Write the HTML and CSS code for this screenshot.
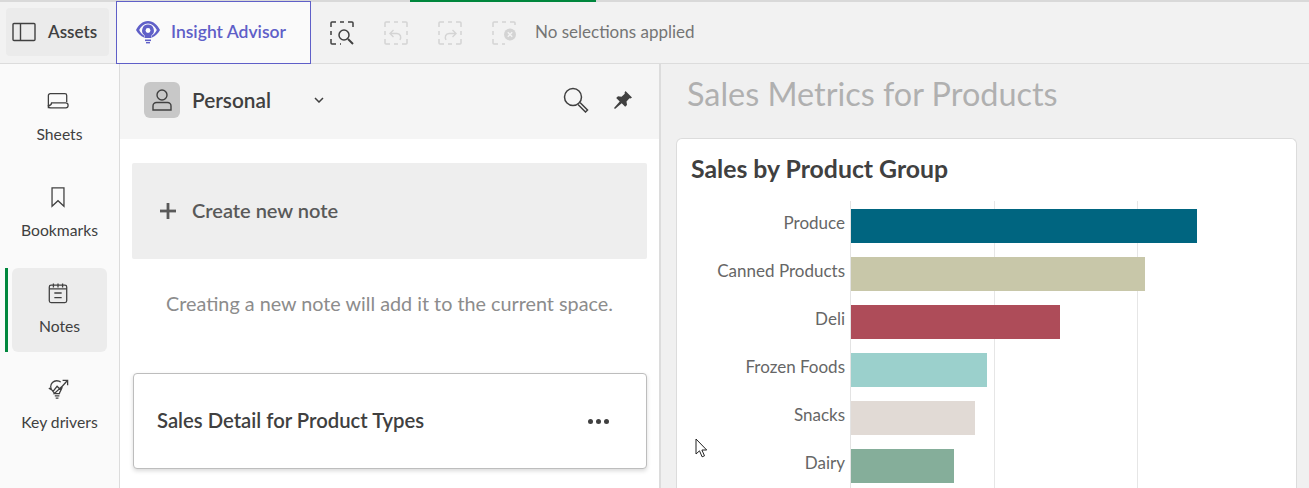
FILE: index.html
```html
<!DOCTYPE html>
<html lang="en">
<head>
    <meta charset="UTF-8">
    <meta name="viewport" content="width=device-width, initial-scale=1.0">
    <title>Sales Metrics for Products</title>
    <link rel="stylesheet" href="styles.css">
</head>
<body>
    <div class="progress"></div>
    <header class="toolbar">
        <button class="assets-btn">
            <svg width="24" height="20" viewBox="0 0 24 20" fill="none" stroke="#404040" stroke-width="1.4"><rect x="1" y="1.5" width="22" height="17" rx="1"/><path d="M8.5 1.5v17"/></svg>
            <span>Assets</span>
        </button>
        <button class="insight-btn">
            <svg width="26" height="24" viewBox="0 0 26 24"><path fill="#5f5fc8" d="M13 1C7.5 1 3.500 5 1 10c2 3.500 4.500 6 8 7.500V15.500c-2-1-3.600-3-4.800-5.500C6 6.500 9 3.500 13 3.500s7 3 8.800 6.500c-1.200 2.500-2.800 4.500-4.800 5.500v2c3.500-1.500 6-4 8-7.500C22.500 5 18.500 1 13 1z"/><path fill="#5f5fc8" d="M13 4.500a6 6 0 0 0-3.500 10.800V18h7v-2.700A6 6 0 0 0 13 4.500z"/><circle cx="13" cy="10.500" r="2.400" fill="#fff"/><rect x="10" y="19.500" width="6" height="1.600" fill="#5f5fc8"/><rect x="11" y="22" width="4" height="1.400" fill="#5f5fc8"/></svg>
            <span>Insight Advisor</span>
        </button>
        <div class="sel-tools">
            <svg class="sel-icon" viewBox="0 0 24 24" fill="none" stroke="#404040" stroke-width="1.500"><path d="M1 6V2a1 1 0 0 1 1-1h4M10 1h4M18 1h4a1 1 0 0 1 1 1v4M1 10v4M1 18v4a1 1 0 0 0 1 1h4M10 23h1"/><circle cx="14" cy="14" r="5"/><path d="M18 18l5 5" stroke-width="2"/></svg>
            <svg class="sel-icon" viewBox="0 0 24 24" fill="none" stroke="#d4d4d4" stroke-width="1.500"><path d="M1 6V2a1 1 0 0 1 1-1h4M10 1h4M18 1h4a1 1 0 0 1 1 1v4M23 10v4M23 18v4a1 1 0 0 1-1 1h-4M14 23h-4M6 23H2a1 1 0 0 1-1-1v-4M1 14v-4"/><path d="M16 19c1.500-3 .5-6.500-3-6.500H6M9.500 9L6 12.500 9.500 16" stroke-width="1.400"/></svg>
            <svg class="sel-icon" viewBox="0 0 24 24" fill="none" stroke="#d4d4d4" stroke-width="1.500"><path d="M1 6V2a1 1 0 0 1 1-1h4M10 1h4M18 1h4a1 1 0 0 1 1 1v4M23 10v4M23 18v4a1 1 0 0 1-1 1h-4M14 23h-4M6 23H2a1 1 0 0 1-1-1v-4M1 14v-4"/><path d="M8 19c-1.500-3-.5-6.500 3-6.500h7M14.500 9l3.500 3.500-3.500 3.500" stroke-width="1.400"/></svg>
            <svg class="sel-icon" viewBox="0 0 24 24" fill="none" stroke="#d4d4d4" stroke-width="1.500"><path d="M1 6V2a1 1 0 0 1 1-1h4M10 1h4M18 1h4a1 1 0 0 1 1 1v2M1 10v4M1 18v4a1 1 0 0 0 1 1h4M10 23h3"/><circle cx="18" cy="13.500" r="6" fill="#d4d4d4" stroke="none"/><path d="M15.800 11.300l4.400 4.400M20.200 11.300l-4.400 4.400" stroke="#f2f2f2"/></svg>
            <span class="sel-text">No selections applied</span>
        </div>
    </header>

    <div class="main">
        <nav class="sidebar">
            <a class="nav-item">
                <svg width="24" height="24" viewBox="0 0 24 24" fill="none" stroke="#404040" stroke-width="1.400"><path d="M1.500 20V6a2 2 0 0 1 2-2h16a2 2 0 0 1 2 2v7"/><path d="M5 14h15.500a2.500 2.500 0 0 1 2.500 2.500v.5a2.500 2.500 0 0 1-2.500 2.500H4A2.500 2.500 0 0 1 1.500 17c2 0 3.500-1 3.500-3z"/></svg>
                <span>Sheets</span>
            </a>
            <a class="nav-item">
                <svg width="24" height="24" viewBox="0 0 24 24" fill="none" stroke="#404040" stroke-width="1.400"><path d="M5.500 2h13v20L12 16l-6.500 6z"/></svg>
                <span>Bookmarks</span>
            </a>
            <a class="nav-item active">
                <svg width="24" height="24" viewBox="0 0 24 24" fill="none" stroke="#404040" stroke-width="1.400"><rect x="2.500" y="3.500" width="19" height="19" rx="2"/><path d="M7 1.500V6M12 1.500V6M17 1.500V6M2.500 7.500h19M8 12h8M8 17h8"/></svg>
                <span>Notes</span>
            </a>
            <a class="nav-item">
                <svg width="24" height="24" viewBox="0 0 24 24" fill="none" stroke="#404040" stroke-width="1.400"><path d="M8 17c0-2-4-3-4-7.500C4 6 7 3 10.500 3c2 0 3.500.5 4.500 1.500M16.500 9c.5 3-2.500 5-3 8H8zM8.500 19.500h5M9.500 22h3M2 11l5 3 4-5 3 3 8-9M17 2.500h5.500V8"/></svg>
                <span>Key drivers</span>
            </a>
        </nav>

        <section class="notes-panel">
            <div class="panel-head">
                <span class="avatar">
                    <svg width="24" height="24" viewBox="0 0 24 24" fill="none" stroke="#404040" stroke-width="1.400"><circle cx="12" cy="7" r="5"/><path d="M3 22v-4a3.500 3.500 0 0 1 3.500-3.500h11A3.500 3.500 0 0 1 21 18v4z"/></svg>
                </span>
                <span class="space-name">Personal</span>
                <svg class="chevron" width="10" height="6" viewBox="0 0 10 6" fill="none" stroke="#404040" stroke-width="1.500"><path d="M1 1l4 4 4-4"/></svg>
                <svg class="head-search" width="26" height="26" viewBox="0 0 26 26" fill="none" stroke="#404040" stroke-width="1.500"><circle cx="10" cy="10" r="8.500"/><path d="M17 15.500l7.500 7.500-2 2-7.500-7.500"/></svg>
                <svg class="head-pin" width="20" height="20" viewBox="0 0 20 20"><path fill="#404040" d="M12.500 1l6.500 6.500-1.500 1-1-.3-3 3.300.5 3.500-1.800 1.800-3.500-3.500L2 19 1 18l5.700-6.500L3.200 8l1.800-1.800 3.500.5 3.300-3-.3-1z"/></svg>
            </div>
            <div class="panel-body">
                <div class="create-note">
                    <svg width="18" height="18" viewBox="0 0 18 18" fill="#595959"><rect x="7.600" y="1" width="2.800" height="16"/><rect x="1" y="7.600" width="16" height="2.800"/></svg>
                    <span>Create new note</span>
                </div>
                <p class="hint">Creating a new note will add it to the current space.</p>
                <div class="note-card">
                    <span>Sales Detail for Product Types</span>
                    <span class="dots"><i></i><i></i><i></i></span>
                </div>
            </div>
        </section>

        <section class="sheet">
            <h1>Sales Metrics for Products</h1>
            <div class="chart-card">
                <h2>Sales by Product Group</h2>
                <div class="chart">
                    <div class="labels">
                        <span>Produce</span>
                        <span>Canned Products</span>
                        <span>Deli</span>
                        <span>Frozen Foods</span>
                        <span>Snacks</span>
                        <span>Dairy</span>
                    </div>
                    <div class="plot">
                        <div class="bar" style="width:346px;background:#006580"></div>
                        <div class="bar" style="width:294px;background:#c8c7a9"></div>
                        <div class="bar" style="width:209px;background:#ae4c59"></div>
                        <div class="bar" style="width:136px;background:#9bd0cc"></div>
                        <div class="bar" style="width:124px;background:#e1dad5"></div>
                        <div class="bar" style="width:103px;background:#85ae9a"></div>
                    </div>
                </div>
            </div>
        </section>
    </div>

    <svg class="cursor" width="14" height="21" viewBox="0 0 14 21"><path fill="#fff" stroke="#222" d="M1 1v15l3.500-3.200 2.600 6 2.400-1-2.600-5.800h4.800z"/></svg>
</body>
</html>
```

FILE: styles.css
```css
:root {
    --text-color: #404040;
    --muted: #757575;
    --line: #dcdcdc;
    --green: #00873d;
    --purple: #5f5fc8;
}

body {
    margin: 0;
    height: 488px;
    overflow: hidden;
    position: relative;
    font-family: Lato, "Noto Sans", sans-serif;
    color: var(--text-color);
    background-color: #f2f2f2;
}

.progress {
    height: 2px;
    background: linear-gradient(to right, #d9d9d9 410px, var(--green) 410px, var(--green) 596px, #d9d9d9 596px);
}

.toolbar {
    height: 61px;
    display: flex;
    align-items: center;
    padding-left: 6px;
    border-bottom: 1px solid var(--line);
    background: #f2f2f2;
}

.toolbar button {
    font-family: inherit;
    display: flex;
    align-items: center;
    cursor: pointer;
}

.toolbar span {
    padding-bottom: 2px;
}

.assets-btn {
    width: 103px;
    height: 48px;
    gap: 12px;
    margin-top: -1px;
    padding: 0 0 0 6px;
    border: none;
    border-radius: 4px;
    background: #ebebeb;
    color: var(--text-color);
    font-size: 17px;
    font-weight: 600;
}

.insight-btn {
    width: 195px;
    height: 63px;
    gap: 10px;
    margin: -2px 0 -1px 7px;
    padding: 0 0 0 18px;
    border: 1px solid var(--purple);
    background: #fafafa;
    color: var(--purple);
    font-size: 17.5px;
    font-weight: 600;
}

.sel-tools {
    display: flex;
    align-items: center;
    gap: 30px;
    margin-left: 19px;
}

.sel-icon {
    width: 24px;
    height: 24px;
}

.sel-text {
    margin-left: -11px;
    font-size: 17px;
    color: var(--muted);
}

.main {
    display: flex;
    height: 424px;
    overflow: hidden;
}

.sidebar {
    width: 120px;
    flex-shrink: 0;
    padding-top: 12px;
    box-sizing: border-box;
    border-right: 1px solid var(--line);
    background: #fafafa;
}

.nav-item {
    height: 84px;
    margin: 0 12px 12px 12px;
    width: 95px;
    padding-top: 14px;
    box-sizing: border-box;
    display: flex;
    flex-direction: column;
    align-items: center;
    gap: 13px;
    border-radius: 6px;
    font-size: 15.7px;
    position: relative;
}

.nav-item svg {
    width: 22px;
    height: 22px;
    margin-right: 3px;
}

.nav-item.active {
    background: #ececec;
}

.nav-item.active::before {
    content: "";
    position: absolute;
    left: -7px;
    top: 0;
    bottom: 0;
    width: 3px;
    background: var(--green);
}

.notes-panel {
    width: 539px;
    flex-shrink: 0;
    background: #fff;
    border-right: 2px solid var(--line);
}

.panel-head {
    height: 75px;
    display: flex;
    align-items: center;
    padding: 0 16px 4px 24px;
    box-sizing: border-box;
    background: #f5f5f5;
}

.avatar {
    width: 36px;
    height: 36px;
    display: flex;
    align-items: center;
    justify-content: center;
    border-radius: 6px;
    background: #c8c8c8;
}

.space-name {
    margin-left: 12px;
    width: 122px;
    font-size: 20.8px;
    font-weight: 600;
}

.head-search {
    margin-left: 239px;
}

.head-pin {
    margin-left: 24px;
}

.panel-body {
    padding: 24px 12px 0;
}

.create-note {
    height: 96px;
    display: flex;
    align-items: center;
    gap: 15px;
    padding-left: 27px;
    box-sizing: border-box;
    background: #eeeeee;
    border-radius: 2px;
    font-size: 20px;
    font-weight: 600;
    color: #595959;
}

.create-note span {
    padding-bottom: 2px;
}

.hint {
    margin: 0;
    height: 114px;
    padding-top: 32px;
    box-sizing: border-box;
    text-align: center;
    font-size: 19.8px;
    color: #8c8c8c;
}

.note-card {
    height: 96px;
    margin-left: 1px;
    display: flex;
    align-items: center;
    justify-content: space-between;
    padding: 0 37px 0 23px;
    box-sizing: border-box;
    background: #fff;
    border: 1px solid #bdbdbd;
    border-radius: 4px;
    box-shadow: 0 2px 4px rgba(0, 0, 0, 0.15);
    font-size: 20.3px;
    font-weight: 600;
}

.note-card span:first-child {
    padding-bottom: 2px;
}

.dots {
    display: flex;
    gap: 3px;
}

.dots i {
    width: 5px;
    height: 5px;
    border-radius: 50%;
    background: var(--text-color);
}

.sheet {
    flex: 1;
    padding: 0 12px 0 15px;
    background: #f0f0f0;
}

.sheet h1 {
    margin: 0;
    height: 74px;
    padding-left: 11px;
    line-height: 60px;
    font-size: 32.4px;
    font-weight: 400;
    color: #b0b0b0;
}

.chart-card {
    height: 350px;
    padding: 15px 14px 0;
    box-sizing: border-box;
    background: #fff;
    border: 1px solid var(--line);
    border-bottom: none;
    border-radius: 6px 6px 0 0;
}

.chart-card h2 {
    margin: 0;
    font-size: 24.8px;
    line-height: 30px;
    font-weight: 700;
}

.chart {
    display: flex;
    margin-top: 17px;
}

.labels {
    width: 159px;
    padding-top: 8px;
    display: flex;
    flex-direction: column;
    gap: 14px;
    align-items: flex-end;
    font-size: 17px;
    color: #666;
}

.labels span {
    height: 34px;
    line-height: 28px;
    padding-right: 5px;
}

.plot {
    width: 430px;
    height: 287px;
    padding-top: 8px;
    box-sizing: border-box;
    display: flex;
    flex-direction: column;
    gap: 14px;
    border-left: 1px solid #e3e3e3;
    background:
        linear-gradient(#e6e6e6, #e6e6e6) 143px 0 / 1px 100% no-repeat,
        linear-gradient(#e6e6e6, #e6e6e6) 286px 0 / 1px 100% no-repeat,
        linear-gradient(#e6e6e6, #e6e6e6) 429px 0 / 1px 100% no-repeat;
}

.bar {
    height: 34px;
    flex-shrink: 0;
}

.cursor {
    position: absolute;
    left: 695px;
    top: 438px;
}
```
